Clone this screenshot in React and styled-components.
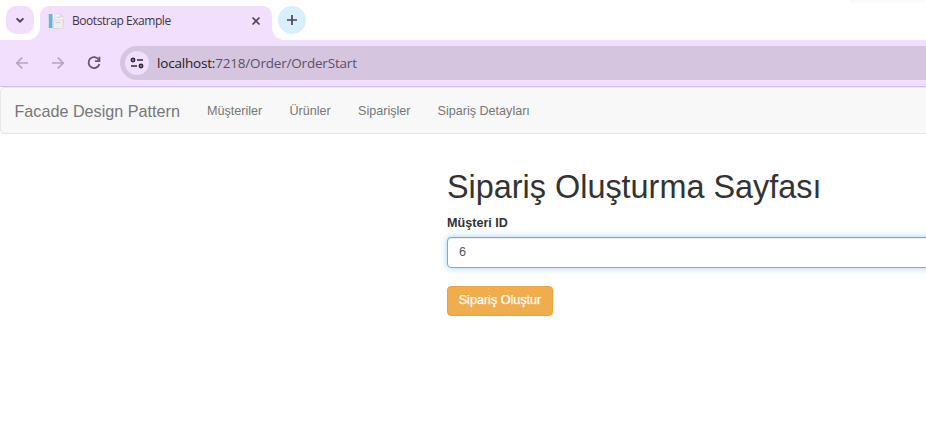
import React from "react";
import styled, { createGlobalStyle } from "styled-components";

const GlobalStyle = createGlobalStyle`
  * { box-sizing: border-box; }
  body {
    margin: 0;
    background: #fff;
    overflow: hidden;
    font-family: "Liberation Sans", Arial, sans-serif;
    font-size: 12.6px;
    line-height: 18px;
    color: #333;
  }
`;

const Window = styled.div`
  height: 447px;
  overflow: hidden;
`;

const TabStrip = styled.header`
  display: flex;
  height: 40px;
  padding: 6px 0 0 6px;
  background: linear-gradient(#f9f9f9, #fff) 850px 0 / 76px 4px no-repeat #fff;
  font-family: "Open Sans", "Noto Sans", sans-serif;
`;

const TabSearch = styled.button`
  display: grid;
  place-items: center;
  width: 28px;
  height: 28px;
  padding: 0;
  border: 0;
  border-radius: 10px;
  background: #f2defd;
`;

const Tab = styled.div`
  position: relative;
  display: flex;
  align-items: center;
  width: 232px;
  height: 34px;
  margin-left: 6px;
  padding: 0 9px 5px 8px;
  border-radius: 9px 9px 0 0;
  background: #f2defd;

  &::before,
  &::after {
    content: "";
    position: absolute;
    bottom: 0;
    width: 12px;
    height: 12px;
  }
  &::before {
    left: -12px;
    background: radial-gradient(circle at 0 0, transparent 11.5px, #f2defd 12.2px);
  }
  &::after {
    right: -12px;
    background: radial-gradient(circle at 100% 0, transparent 11.5px, #f2defd 12.2px);
  }
`;

const TabTitle = styled.span`
  flex: 1;
  margin-left: 8px;
  font-size: 12px;
  line-height: 16px;
  letter-spacing: -0.45px;
  color: #3c3842;
  white-space: nowrap;
`;

const NewTab = styled.button`
  display: grid;
  place-items: center;
  width: 28px;
  height: 28px;
  margin-left: 6px;
  padding: 0;
  border: 0;
  border-radius: 50%;
  background: #daeffe;
`;

const Toolbar = styled.div`
  display: flex;
  align-items: center;
  height: 47px;
  padding-left: 14px;
  border-bottom: 1px solid #d2c3df;
  background: #f2defd;
`;

const NavIcons = styled.div`
  display: flex;
  gap: 20px;
  width: 106px;
`;

const Omnibox = styled.div`
  display: flex;
  flex: 1;
  align-items: center;
  height: 34px;
  padding-left: 5px;
  border-radius: 17px 0 0 17px;
  background: #d5c5de;
`;

const SiteInfo = styled.span`
  display: grid;
  place-items: center;
  width: 24px;
  height: 24px;
  border-radius: 50%;
  background: #f2defd;
`;

const Address = styled.span`
  margin-left: 8px;
  font-family: "Open Sans", "Noto Sans", sans-serif;
  font-size: 13.5px;
  letter-spacing: -0.19px;
  color: #5a5266;
  white-space: nowrap;
`;

const Host = styled.span`
  color: #1f1b24;
`;

const Navbar = styled.nav`
  display: flex;
  align-items: center;
  width: 940px;
  height: 47px;
  padding: 0 0 0 13.4px;
  border: 1px solid #e7e7e7;
  border-radius: 4px;
  background: #f8f8f8;
  color: #777;
`;

const Brand = styled.span`
  width: 192.6px;
  font-size: 16.2px;
  white-space: nowrap;
`;

const NavLink = styled.span`
  width: ${(p) => p.$width}px;
  white-space: nowrap;
`;

const Form = styled.form`
  display: flex;
  flex-direction: column;
  align-items: flex-start;
  width: 600px;
  margin: 35px 0 0 447px;
`;

const Title = styled.h1`
  margin: 0 0 9px;
  font-size: 32.4px;
  line-height: 36px;
  font-weight: 400;
  white-space: nowrap;
`;

const Label = styled.label`
  margin-bottom: 5px;
  font-weight: 700;
`;

const Input = styled.input`
  width: 100%;
  height: 31px;
  padding: 5px 11px 6px;
  border: 1px solid #66afe9;
  border-radius: 4px;
  outline: 0;
  background: #fff;
  box-shadow: inset 0 1px 1px rgba(0, 0, 0, 0.075), 0 0 7px rgba(102, 175, 233, 0.6);
  color: #555;
  font: inherit;
`;

const Submit = styled.button`
  width: 106px;
  height: 30px;
  margin-top: 18px;
  padding: 0 0 3px;
  border: 1px solid #eea236;
  border-radius: 4px;
  background: #f0ad4e;
  color: #fff;
  font: inherit;
  -webkit-text-stroke: 0.25px #fff;
  white-space: nowrap;
`;

const NAV_ITEMS = [
  { label: "Müşteriler", width: 82.5 },
  { label: "Ürünler", width: 68.5 },
  { label: "Siparişler", width: 79.5 },
  { label: "Sipariş Detayları", width: 100 },
];

const Stroke = ({ size = 16, color = "#4a464f", width = 1.7, d }) => (
  <svg width={size} height={size} viewBox={`0 0 ${size} ${size}`} fill="none" stroke={color} strokeWidth={width}>
    <path d={d} />
  </svg>
);

const PageIcon = () => (
  <svg width="16" height="16" viewBox="0 0 16 16">
    <path d="M0.5 1h4.5v14h-4.5z" fill="#6fafd8" />
    <path d="M0.5 1v14" stroke="#cfdde6" />
    <path d="M4.5 1h2.5v14H4.5z" fill="#eef4f7" />
    <path d="M7 .7h5.5L15 3.3v10.2H7z" fill="#f4f3f4" stroke="#d5d3d8" strokeWidth=".6" />
    <path d="M5.5 7h9.5v8.5H5.5z" fill="#efeef0" stroke="#d0ced3" strokeWidth=".6" />
    <path d="M8.5 4.3h4M7.5 9.6h5" stroke="#c3c4c8" strokeWidth=".8" />
    <path d="M12.3 .8v2.6H15" fill="#e2e0e4" stroke="#c9c7cc" strokeWidth=".5" />
  </svg>
);

const ReloadIcon = () => (
  <svg width="16" height="16" viewBox="0 0 16 16" fill="none" stroke="#605b66" strokeWidth="1.8">
    <path d="M12.8 4.7A5.5 5.5 0 1 0 13.4 9" />
    <path d="M13.4 1.8v4.4H9" />
  </svg>
);

const TuneIcon = () => (
  <svg width="14" height="14" viewBox="0 0 14 14" fill="none" stroke="#302b36" strokeWidth="1.7">
    <circle cx="3" cy="4" r="1.6" />
    <path d="M7 4h6M1 10h6" />
    <circle cx="11" cy="10" r="1.6" />
  </svg>
);

export default function App() {
  return (
    <Window>
      <GlobalStyle />
      <TabStrip>
        <TabSearch aria-label="Search tabs">
          <Stroke d="M4.6 6.4 8 9.7l3.4-3.3" width={2} />
        </TabSearch>
        <Tab>
          <PageIcon />
          <TabTitle>Bootstrap Example</TabTitle>
          <Stroke size={14} d="M3.5 3.5l7 7M10.5 3.5l-7 7" width={1.6} />
        </Tab>
        <NewTab aria-label="New tab">
          <Stroke d="M8 3v10M3 8h10" />
        </NewTab>
      </TabStrip>
      <Toolbar>
        <NavIcons>
          <Stroke d="M14 8H3M8.2 2.6 2.8 8l5.4 5.4" color="#b3a6bd" />
          <Stroke d="M2 8h11M7.8 2.6 13.2 8l-5.4 5.4" color="#b3a6bd" />
          <ReloadIcon />
        </NavIcons>
        <Omnibox>
          <SiteInfo>
            <TuneIcon />
          </SiteInfo>
          <Address>
            <Host>localhost:</Host>7218/Order/OrderStart
          </Address>
        </Omnibox>
      </Toolbar>
      <Navbar>
        <Brand>Facade Design Pattern</Brand>
        {NAV_ITEMS.map((item) => (
          <NavLink key={item.label} $width={item.width}>
            {item.label}
          </NavLink>
        ))}
      </Navbar>
      <Form onSubmit={(e) => e.preventDefault()}>
        <Title>Sipariş Oluşturma Sayfası</Title>
        <Label htmlFor="customer">Müşteri ID</Label>
        <Input id="customer" defaultValue="6" />
        <Submit>Sipariş Oluştur</Submit>
      </Form>
    </Window>
  );
}
